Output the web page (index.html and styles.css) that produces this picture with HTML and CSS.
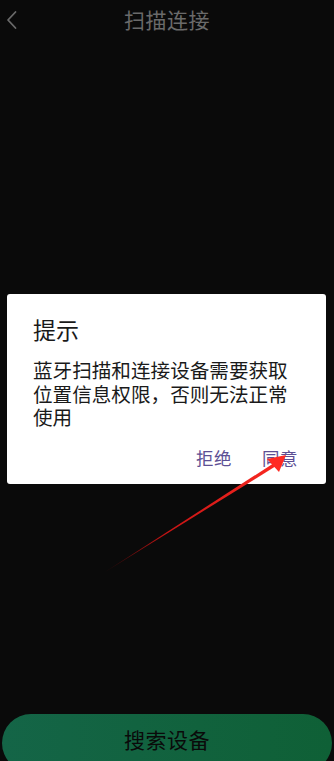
FILE: index.html
```html
<!DOCTYPE html>
<html lang="zh">
<head>
<meta charset="utf-8">
<link rel="stylesheet" href="styles.css">
</head>
<body>
<div class="page">
  <header class="topbar">
    <svg class="back" width="12" height="20" viewBox="0 0 12 20"><path d="M9.5 2 L2 10 L9.5 18" fill="none" stroke="#6a6a6a" stroke-width="1.8" stroke-linecap="round" stroke-linejoin="round"/></svg>
    <h1 class="title">扫描连接</h1>
  </header>
  <main class="content"></main>
  <footer class="footer">
    <button class="search">搜索设备</button>
  </footer>
</div>

<div class="dialog">
  <div class="dlg-title">提示</div>
  <div class="dlg-body">蓝牙扫描和连接设备需要获取位置信息权限，否则无法正常使用</div>
  <div class="dlg-actions">
    <span class="dlg-btn">拒绝</span>
    <span class="dlg-btn">同意</span>
  </div>
</div>

<svg class="arrow" width="334" height="761" viewBox="0 0 334 761">
  <defs>
    <linearGradient id="ag" x1="105" y1="572" x2="285" y2="456" gradientUnits="userSpaceOnUse">
      <stop offset="0" stop-color="#3a0606"/>
      <stop offset="0.35" stop-color="#c81414"/>
      <stop offset="1" stop-color="#ff2a22"/>
    </linearGradient>
  </defs>
  <polygon points="105,572 274,463 276,466" fill="url(#ag)"/>
  <polygon points="286,455 267,459 279,472" fill="#ff2a22"/>
</svg>
</body>
</html>
```
FILE: styles.css
```css
html, body {
  margin: 0;
  padding: 0;
  background: #0a0a0a;
}
body {
  width: 334px;
  height: 761px;
  overflow: hidden;
  position: relative;
  font-family: "Noto Sans CJK SC", "Noto Sans", sans-serif;
}
.page {
  height: 761px;
  display: flex;
  flex-direction: column;
}
.topbar {
  height: 42px;
  display: flex;
  align-items: center;
  justify-content: center;
  position: relative;
}
.back {
  position: absolute;
  left: 6px;
  top: 10px;
}
.title {
  margin: 0;
  margin-top: -4px;
  font-size: 21px;
  font-weight: 400;
  color: #6a6a6a;
  letter-spacing: 0.5px;
}
.content {
  flex: 1;
}
.footer {
  padding: 0 2px;
  height: 47px;
}
.search {
  display: block;
  width: 100%;
  height: 58px;
  border: none;
  border-radius: 29px;
  background: linear-gradient(90deg, #146547 0%, #0f6036 100%);
  color: #0a0a0a;
  font-family: "Noto Sans CJK SC", sans-serif;
  font-size: 21px;
  padding: 0 0 8px;
  letter-spacing: 0.5px;
}
.dialog {
  position: absolute;
  left: 7px;
  top: 294px;
  width: 319px;
  height: 190px;
  box-sizing: border-box;
  background: #fff;
  border-radius: 3px;
  padding: 18px 26px 0 26px;
}
.dlg-title {
  font-size: 23px;
  line-height: 34px;
  color: #1a1a1a;
}
.dlg-body {
  margin-top: 12px;
  font-size: 19.6px;
  line-height: 23.5px;
  color: #1a1a1a;
}
.dlg-actions {
  display: flex;
  justify-content: flex-end;
  gap: 30px;
  margin-top: 17px;
  padding-right: 2px;
}
.dlg-btn {
  font-size: 17.5px;
  line-height: 24px;
  color: #5d4f94;
  letter-spacing: 0.5px;
}
.arrow {
  position: absolute;
  left: 0;
  top: 0;
  pointer-events: none;
}
```
